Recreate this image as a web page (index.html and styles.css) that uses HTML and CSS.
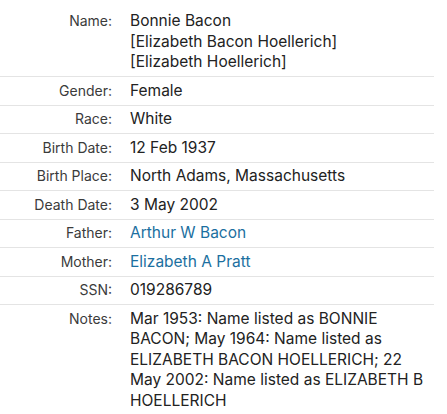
FILE: index.html
```html
<!DOCTYPE html>
<html>
<head>
<meta charset="utf-8">
<link rel="stylesheet" href="styles.css">
</head>
<body>
<div class="record">
  <div class="row">
    <div class="label">Name:</div>
    <div class="value">Bonnie Bacon<br>[Elizabeth Bacon Hoellerich]<br>[Elizabeth Hoellerich]</div>
  </div>
  <div class="row">
    <div class="label">Gender:</div>
    <div class="value">Female</div>
  </div>
  <div class="row">
    <div class="label">Race:</div>
    <div class="value">White</div>
  </div>
  <div class="row">
    <div class="label">Birth Date:</div>
    <div class="value">12 Feb 1937</div>
  </div>
  <div class="row">
    <div class="label">Birth Place:</div>
    <div class="value">North Adams, Massachusetts</div>
  </div>
  <div class="row">
    <div class="label">Death Date:</div>
    <div class="value">3 May 2002</div>
  </div>
  <div class="row">
    <div class="label">Father:</div>
    <div class="value"><a class="link" href="#">Arthur W Bacon</a></div>
  </div>
  <div class="row">
    <div class="label">Mother:</div>
    <div class="value"><a class="link" href="#">Elizabeth A Pratt</a></div>
  </div>
  <div class="row">
    <div class="label">SSN:</div>
    <div class="value">019286789</div>
  </div>
  <div class="row">
    <div class="label">Notes:</div>
    <div class="value">Mar 1953: Name listed as BONNIE BACON; May 1964: Name listed as ELIZABETH BACON HOELLERICH; 22 May 2002: Name listed as ELIZABETH B HOELLERICH</div>
  </div>
</div>
</body>
</html>
```
FILE: styles.css
```css
html, body {
  margin: 0;
  padding: 0;
  background: #fff;
}
body {
  font-family: Inter, "Liberation Sans", sans-serif;
  color: #222;
}
.record {
  width: 434px;
  padding-top: 7.5px;
}
.row {
  display: grid;
  grid-template-columns: 112px 1fr;
  border-bottom: 1px solid #e4e4e4;
  padding: 3.5px 0;
}
.row:last-child {
  border-bottom: none;
}
.label {
  text-align: right;
  font-size: 14px;
  line-height: 20.5px;
  color: #3b3b3b;
}
.value {
  font-size: 15.5px;
  line-height: 20.5px;
  padding-left: 18px;
  padding-right: 6px;
}
.link {
  color: #1b6fa0;
  text-decoration: none;
}
```
